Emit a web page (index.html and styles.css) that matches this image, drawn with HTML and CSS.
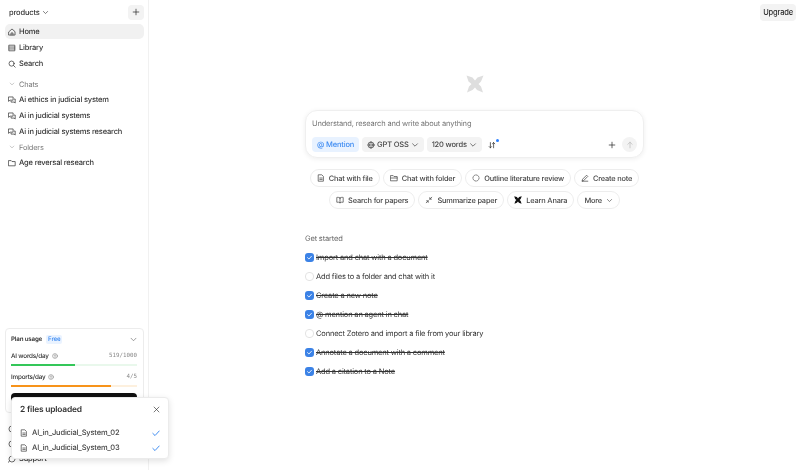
FILE: index.html
```html
<!DOCTYPE html>
<html>
<head>
  <title>Anara</title>
  <link rel="stylesheet" href="styles.css">
</head>
<body>
  <div class="app">
    <aside class="sidebar">
      <div class="workspace">
        <span class="workspace-name">products
          <svg class="caret" viewBox="0 0 10 10"><path d="M2 3.5l3 3 3-3"/></svg>
        </span>
        <button class="add-btn">
          <svg viewBox="0 0 10 10"><path d="M5 1.5v7M1.5 5h7"/></svg>
        </button>
      </div>
      <nav class="nav">
        <a class="nav-item active">
          <svg viewBox="0 0 10 10"><path d="M1.2 4.6L5 1.2l3.800 3.400v4.200H1.200zM3.800 8.800V6.200h2.400v2.600"/></svg>Home
        </a>
        <a class="nav-item">
          <svg viewBox="0 0 10 10"><path d="M1.500 1.500h7v7h-7zM1.500 3.800h7M1.500 6.200h7"/></svg>Library
        </a>
        <a class="nav-item">
          <svg viewBox="0 0 10 10"><circle cx="4.500" cy="4.500" r="3.200"/><path d="M7 7l2 2"/></svg>Search
        </a>
      </nav>
      <div class="group-label first">
        <svg viewBox="0 0 10 10"><path d="M2 3.500l3 3 3-3"/></svg>Chats
      </div>
      <a class="nav-item">
        <svg viewBox="0 0 10 10"><path d="M1 1.200h5.400v4H2.600L1 6.400zM8 3.800h1v5L7.600 7.600H3.800V6.400"/></svg>Ai ethics in judicial system
      </a>
      <a class="nav-item">
        <svg viewBox="0 0 10 10"><path d="M1 1.200h5.400v4H2.600L1 6.400zM8 3.800h1v5L7.600 7.600H3.800V6.400"/></svg>Ai in judicial systems
      </a>
      <a class="nav-item">
        <svg viewBox="0 0 10 10"><path d="M1 1.200h5.400v4H2.600L1 6.400zM8 3.800h1v5L7.600 7.600H3.800V6.400"/></svg>Ai in judicial systems research
      </a>
      <div class="group-label folders">
        <svg viewBox="0 0 10 10"><path d="M2 3.500l3 3 3-3"/></svg>Folders
      </div>
      <a class="nav-item">
        <svg viewBox="0 0 10 10"><path d="M1 2h3l1 1.200h4v5.300H1z"/></svg>Age reversal research
      </a>

      <div class="plan-card">
        <div class="plan-head">
          <span class="plan-title">Plan usage</span>
          <span class="plan-badge">Free</span>
          <svg class="plan-toggle" viewBox="0 0 10 10"><path d="M1.500 3.200L5 6.800l3.500-3.600"/></svg>
        </div>
        <div class="usage-row">
          <span class="usage-name">AI words/day
            <svg viewBox="0 0 10 10"><circle cx="5" cy="5" r="4"/><path d="M3.800 4a1.200 1.200 0 1 1 1.700 1.100c-.4.200-.5.400-.5.800M5 7.200v.2"/></svg>
          </span>
          <span class="usage-count">519/1000</span>
        </div>
        <div class="bar green"><div class="bar-fill" style="width: 51%"></div></div>
        <div class="usage-row">
          <span class="usage-name">Imports/day
            <svg viewBox="0 0 10 10"><circle cx="5" cy="5" r="4"/><path d="M3.800 4a1.200 1.200 0 1 1 1.700 1.100c-.4.200-.5.400-.5.800M5 7.200v.2"/></svg>
          </span>
          <span class="usage-count">4/5</span>
        </div>
        <div class="bar orange"><div class="bar-fill" style="width: 79%"></div></div>
        <button class="plan-btn"></button>
      </div>
      <div class="side-foot">
        <a class="foot-item">
          <svg viewBox="0 0 10 10"><circle cx="5" cy="5" r="3.800"/></svg>
        </a>
        <a class="foot-item">
          <svg viewBox="0 0 10 10"><circle cx="5" cy="5" r="3.800"/></svg>
        </a>
        <a class="foot-item">
          <svg viewBox="0 0 10 10"><path d="M4.500 1.200a3.800 3.800 0 1 0 4.300 4.300M1.500 7.500L.8 9"/></svg>Support
        </a>
      </div>
    </aside>

    <main class="main">
      <div class="topbar"><button class="upgrade">Upgrade</button></div>
      <div class="content">
        <svg class="logo" viewBox="0 0 18 18"><path d="M.5 .5L6.500 2.500 9 5.500 11.500 2.500 17.500 .5 15 6.500 12.500 9 15 11.500 17 17.500 11 15 9 12.500 6.500 15 1 17.500 3 11.500 5.500 9 2.500 6.500z"/></svg>

        <div class="composer">
          <div class="composer-text">Understand, research and write about anything</div>
          <div class="composer-tools">
            <span class="tool mention">@ Mention</span>
            <span class="tool">
              <svg class="tool-icon" viewBox="0 0 10 10"><circle cx="5" cy="5" r="3.800"/><path d="M1.200 5h7.600M5 1.200c-2.400 2.400-2.400 5.200 0 7.600M5 1.200c2.400 2.400 2.400 5.200 0 7.600"/></svg>
              GPT OSS
              <svg class="tool-caret" viewBox="0 0 10 10"><path d="M2 3.500l3 3 3-3"/></svg>
            </span>
            <span class="tool">120 words
              <svg class="tool-caret" viewBox="0 0 10 10"><path d="M2 3.500l3 3 3-3"/></svg>
            </span>
            <span class="sort">
              <svg viewBox="0 0 10 10"><path d="M3 2v6.500M1.500 7L3 8.500 4.500 7M7 8.500V2M5.500 3.500L7 2l1.500 1.500"/></svg>
              <i class="sort-dot"></i>
            </span>
            <span class="composer-right">
              <svg class="plus" viewBox="0 0 10 10"><path d="M5 1.500v7M1.500 5h7"/></svg>
              <span class="send"><svg viewBox="0 0 10 10"><path d="M5 8.500v-7M2.200 4.200L5 1.500l2.800 2.700"/></svg></span>
            </span>
          </div>
        </div>

        <div class="chips">
          <span class="chip"><svg viewBox="0 0 10 10"><path d="M2 1h4l2 2v6H2zM3.500 5h3M3.500 6.800h3"/></svg>Chat with file</span>
          <span class="chip"><svg viewBox="0 0 10 10"><path d="M1 2h3l1 1.200h4v5.300H1zM1 5h8"/></svg>Chat with folder</span>
          <span class="chip"><svg viewBox="0 0 10 10"><circle cx="5" cy="5" r="3.800" stroke-dasharray="1.600 1.300"/></svg>Outline literature review</span>
          <span class="chip"><svg viewBox="0 0 10 10"><path d="M1.500 8.500l.5-2L7 1.500 8.500 3l-5 5zM1.500 9h7"/></svg>Create note</span>
        </div>
        <div class="chips">
          <span class="chip"><svg viewBox="0 0 10 10"><path d="M5 2.500C4 1.700 2.500 1.500 1 1.800v6C2.500 7.500 4 7.700 5 8.500c1-.8 2.500-1 4-.7v-6C7.500 1.500 6 1.700 5 2.500zM5 2.500v6"/></svg>Search for papers</span>
          <span class="chip"><svg viewBox="0 0 10 10"><path d="M1.500 8.500L4 6M4 8V6H2M8.500 1.500L6 4M6 2v2h2"/></svg>Summarize paper</span>
          <span class="chip"><svg class="dark" viewBox="0 0 18 18"><path d="M.5 .5L6.500 2.500 9 5.500 11.500 2.500 17.500 .5 15 6.500 12.500 9 15 11.500 17 17.500 11 15 9 12.500 6.500 15 1 17.500 3 11.500 5.500 9 2.500 6.500z"/></svg>Learn Anara</span>
          <span class="chip more">More<svg viewBox="0 0 10 10"><path d="M2 3.500l3 3 3-3"/></svg></span>
        </div>

        <div class="started">
          <div class="started-title">Get started</div>
          <ul class="tasks">
            <li class="task done"><span class="check"><svg viewBox="0 0 10 10"><path d="M2.200 5.200l2 2 3.600-4"/></svg></span><span class="task-text">Import and chat with a document</span></li>
            <li class="task"><span class="check"></span><span class="task-text">Add files to a folder and chat with it</span></li>
            <li class="task done"><span class="check"><svg viewBox="0 0 10 10"><path d="M2.200 5.200l2 2 3.600-4"/></svg></span><span class="task-text">Create a new note</span></li>
            <li class="task done"><span class="check"><svg viewBox="0 0 10 10"><path d="M2.200 5.200l2 2 3.600-4"/></svg></span><span class="task-text">@ mention an agent in chat</span></li>
            <li class="task"><span class="check"></span><span class="task-text">Connect Zotero and import a file from your library</span></li>
            <li class="task done"><span class="check"><svg viewBox="0 0 10 10"><path d="M2.200 5.200l2 2 3.600-4"/></svg></span><span class="task-text">Annotate a document with a comment</span></li>
            <li class="task done"><span class="check"><svg viewBox="0 0 10 10"><path d="M2.200 5.200l2 2 3.600-4"/></svg></span><span class="task-text">Add a citation to a Note</span></li>
          </ul>
        </div>
      </div>
    </main>
  </div>

  <div class="upload-toast">
    <div class="toast-head">
      <span class="toast-title">2 files uploaded</span>
      <svg class="toast-close" viewBox="0 0 10 10"><path d="M1.500 1.500l7 7M8.500 1.500l-7 7"/></svg>
    </div>
    <div class="toast-file">
      <svg viewBox="0 0 10 10"><path d="M2 1h4l2 2v6H2zM3.500 5h3M3.500 6.800h3"/></svg>
      <span class="toast-name">AI_in_Judicial_System_02</span>
      <svg class="toast-check" viewBox="0 0 10 10"><path d="M1 5.500l2.800 2.700L9 2.500"/></svg>
    </div>
    <div class="toast-file">
      <svg viewBox="0 0 10 10"><path d="M2 1h4l2 2v6H2zM3.500 5h3M3.500 6.800h3"/></svg>
      <span class="toast-name">AI_in_Judicial_System_03</span>
      <svg class="toast-check" viewBox="0 0 10 10"><path d="M1 5.500l2.800 2.700L9 2.500"/></svg>
    </div>
  </div>
</body>
</html>
```

FILE: styles.css
```css
html, body {
  margin: 0;
  height: 100%;
  overflow: hidden;
}
body {
  font-family: Inter, "Liberation Sans", sans-serif;
  font-size: 7.5px;
  letter-spacing: -0.17px;
  color: #2b2b2b;
  background: #fff;
  position: relative;
  text-rendering: geometricPrecision;
}
svg {
  fill: none;
  stroke: currentColor;
  stroke-width: 0.9;
  stroke-linecap: round;
  stroke-linejoin: round;
  flex: none;
}
button {
  font: inherit;
  letter-spacing: inherit;
  color: inherit;
  border: none;
  padding: 0;
}
.app {
  display: flex;
  height: 470px;
  will-change: transform;
}

/* sidebar */
.sidebar {
  width: 149px;
  height: 470px;
  box-sizing: border-box;
  border-right: 1px solid #f1f1f1;
  padding: 4px 4px 0 5px;
  flex: none;
  overflow: hidden;
}
.workspace {
  display: flex;
  justify-content: space-between;
  align-items: center;
  height: 16px;
  margin-bottom: 4px;
}
.workspace-name {
  display: flex;
  align-items: center;
  gap: 2px;
  padding-left: 4px;
  font-weight: 500;
  color: #333;
}
.caret {
  width: 7px;
  height: 7px;
}
.add-btn {
  width: 16px;
  height: 15px;
  background: #f3f3f3;
  border-radius: 4px;
  display: flex;
  align-items: center;
  justify-content: center;
}
.add-btn svg {
  width: 8px;
  height: 8px;
}
.nav-item {
  display: flex;
  align-items: center;
  gap: 3px;
  height: 15px;
  margin-bottom: 1px;
  padding-left: 3px;
  border-radius: 5px;
  font-weight: 500;
  color: #333;
}
.nav-item svg {
  width: 8px;
  height: 8px;
}
.nav-item.active {
  background: #f1f1f1;
}
.group-label {
  display: flex;
  align-items: center;
  gap: 4px;
  height: 16px;
  padding-left: 4px;
  font-size: 7.4px;
  color: #777;
}
.group-label.first {
  margin-top: 5px;
}
.group-label.folders {
  margin-top: -1px;
}
.group-label svg {
  width: 6px;
  height: 6px;
  color: #999;
}
.plan-card {
  margin-top: 158px;
  width: 139px;
  height: 85px;
  box-sizing: border-box;
  padding: 6px 6px 0 5px;
  border: 1px solid #ececec;
  border-radius: 4px;
  background: #fff;
}
.plan-head {
  display: flex;
  align-items: center;
  gap: 4px;
  height: 9px;
  margin-bottom: 6px;
}
.plan-title {
  font-size: 6.2px;
  font-weight: 600;
  color: #333;
}
.plan-badge {
  font-size: 6.2px;
  font-weight: 500;
  padding: 1px 2px;
  background: #eaf3ff;
  color: #3d8bf2;
  border-radius: 2px;
}
.plan-toggle {
  width: 7px;
  height: 7px;
  margin-left: auto;
  color: #666;
}
.usage-row {
  display: flex;
  justify-content: space-between;
  align-items: center;
  height: 11px;
}
.usage-name {
  display: flex;
  align-items: center;
  gap: 3px;
  font-size: 6.3px;
  font-weight: 500;
}
.usage-name svg {
  width: 6px;
  height: 6px;
  color: #777;
}
.usage-count {
  font-family: "DejaVu Sans Mono", monospace;
  font-size: 5.8px;
  letter-spacing: 0;
  color: #888;
}
.bar {
  height: 2px;
  margin: 3px 0 5px;
  background: #e9f8ec;
}
.bar.orange {
  background: #fdf0de;
  margin-bottom: 6px;
}
.bar-fill {
  height: 100%;
}
.green .bar-fill {
  background: #34c759;
}
.orange .bar-fill {
  background: #f7931a;
}
.plan-btn {
  display: block;
  width: 100%;
  height: 14px;
  background: #111;
  border-radius: 4px;
}
.side-foot {
  padding-top: 8px;
}
.foot-item {
  display: flex;
  align-items: center;
  gap: 3px;
  height: 15px;
  padding-left: 3px;
  font-weight: 500;
  color: #333;
}
.foot-item svg {
  width: 8px;
  height: 8px;
}

/* main column */
.main {
  flex: 1;
  min-width: 0;
}
.topbar {
  display: flex;
  justify-content: flex-end;
  padding: 4px 4px 0 0;
}
.upgrade {
  height: 17px;
  padding: 0 3px;
  background: #f3f3f3;
  border-radius: 4px;
  font-weight: 500;
}
.content {
  display: flex;
  flex-direction: column;
  align-items: center;
}
.logo {
  width: 18px;
  height: 18px;
  margin-top: 54px;
  fill: #dedede;
  stroke: none;
}
.composer {
  width: 339px;
  height: 48px;
  box-sizing: border-box;
  margin-top: 17px;
  padding: 8px 6px 0;
  border: 1px solid #efefef;
  border-radius: 12px;
  box-shadow: 0 1px 5px rgba(0, 0, 0, 0.07);
  background: #fff;
}
.composer-text {
  height: 9px;
  line-height: 9px;
  color: #777;
}
.composer-tools {
  display: flex;
  align-items: center;
  gap: 3px;
  margin-top: 9px;
  height: 15px;
}
.tool {
  display: flex;
  align-items: center;
  gap: 2px;
  height: 15px;
  padding: 0 5px;
  background: #f3f3f3;
  border-radius: 4px;
  font-weight: 500;
  color: #444;
}
.tool.mention {
  background: #e8f2ff;
  color: #3d8bf2;
}
.tool-icon {
  width: 8px;
  height: 8px;
}
.tool-caret {
  width: 8px;
  height: 8px;
}
.sort {
  position: relative;
  display: flex;
  margin-left: 3px;
}
.sort svg {
  width: 8px;
  height: 8px;
}
.sort-dot {
  position: absolute;
  top: -2px;
  right: -3px;
  width: 3px;
  height: 3px;
  border-radius: 50%;
  background: #2a7fff;
}
.composer-right {
  display: flex;
  align-items: center;
  gap: 6px;
  margin-left: auto;
}
.plus {
  width: 8px;
  height: 8px;
}
.send {
  width: 15px;
  height: 15px;
  display: flex;
  align-items: center;
  justify-content: center;
  background: #f3f3f3;
  border-radius: 50%;
  color: #bbb;
}
.send svg {
  width: 8px;
  height: 8px;
}
.chips {
  display: flex;
  gap: 3px;
  margin-top: 4px;
}
.composer + .chips {
  margin-top: 11px;
}
.chip {
  display: flex;
  align-items: center;
  gap: 4px;
  height: 18px;
  box-sizing: border-box;
  padding: 0 6px;
  border: 1px solid #ededed;
  border-radius: 9px;
  font-size: 7.4px;
  font-weight: 500;
  color: #444;
}
.chip svg {
  width: 8px;
  height: 8px;
}
.chip svg.dark {
  fill: #111;
  stroke: none;
}
.chip.more svg {
  width: 7px;
  height: 7px;
}
.started {
  width: 339px;
  margin-top: 25px;
}
.started-title {
  height: 9px;
  line-height: 9px;
  color: #666;
}
.tasks {
  list-style: none;
  margin: 5px 0 0;
  padding: 0;
}
.task {
  display: flex;
  align-items: center;
  gap: 2px;
  height: 19px;
  color: #333;
}
.check {
  width: 9px;
  height: 9px;
  box-sizing: border-box;
  border: 1px solid #e3e3e3;
  border-radius: 4px;
  display: flex;
  align-items: center;
  justify-content: center;
}
.check svg {
  width: 7px;
  height: 7px;
  color: #fff;
  stroke-width: 1.2;
}
.done .check {
  border: none;
  background: #3b82e6;
  border-radius: 3px;
}
.done .task-text {
  text-decoration: line-through;
}

/* upload toast */
.upload-toast {
  position: absolute;
  left: 11px;
  top: 397px;
  width: 158px;
  height: 62px;
  box-sizing: border-box;
  padding: 0 8px;
  background: #fff;
  border: 1px solid #ebebeb;
  border-radius: 4px;
  box-shadow: 0 2px 6px rgba(0, 0, 0, 0.12);
  will-change: transform;
}
.toast-head {
  display: flex;
  justify-content: space-between;
  align-items: center;
  height: 23px;
  margin-bottom: 4px;
}
.toast-title {
  font-size: 8.4px;
  font-weight: 600;
  color: #333;
}
.toast-close {
  width: 7px;
  height: 7px;
}
.toast-file {
  display: flex;
  align-items: center;
  gap: 4px;
  height: 15px;
  color: #444;
  font-weight: 500;
}
.toast-file svg {
  width: 8px;
  height: 8px;
}
.toast-name {
  flex: 1;
}
.toast-file .toast-check {
  color: #2a7fef;
  stroke-width: 1.1;
}
```
